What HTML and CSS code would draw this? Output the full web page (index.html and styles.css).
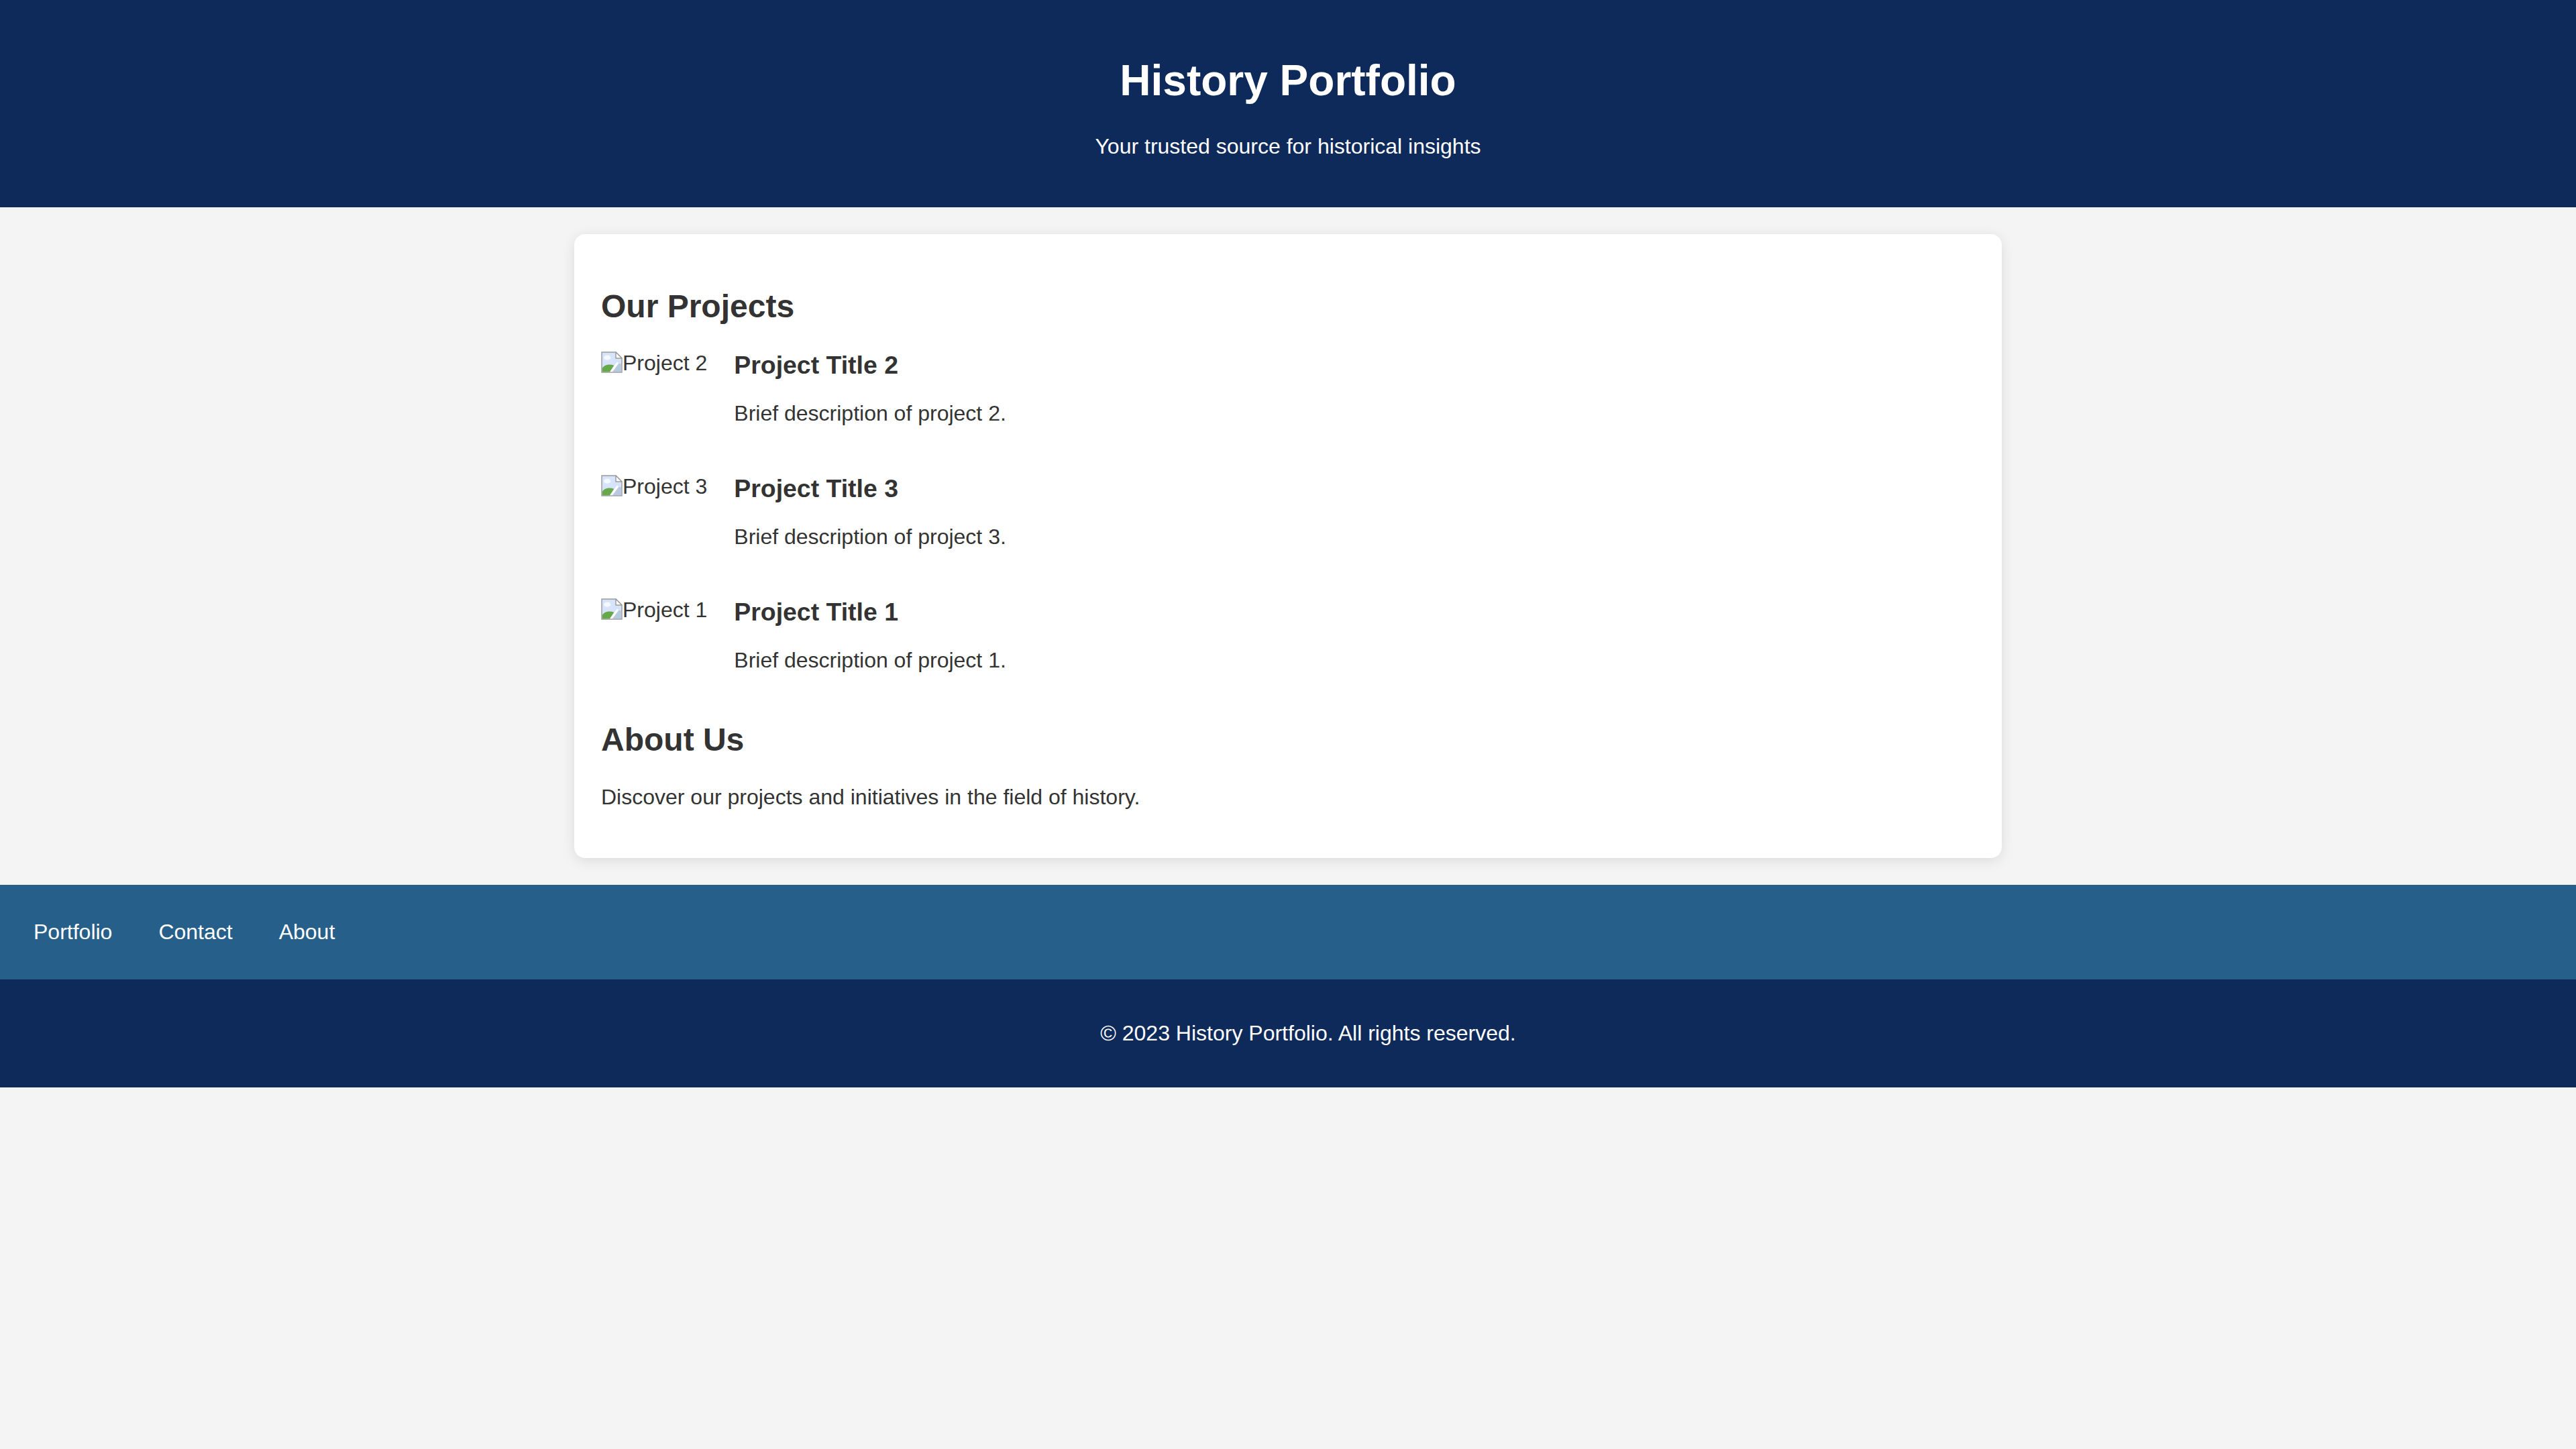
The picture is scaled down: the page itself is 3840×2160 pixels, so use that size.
FILE: index.html
```html
<!DOCTYPE html>
<html lang="en">
<head>
<meta charset="utf-8">
<title>History Portfolio</title>
<link rel="stylesheet" href="styles.css">
</head>
<body>
<header class="site-header">
  <h1 class="site-title">History Portfolio</h1>
  <p class="site-tagline">Your trusted source for historical insights</p>
</header>

<main class="card">
  <section class="projects">
    <h2 class="section-title">Our Projects</h2>

    <div class="project">
      <div class="project-thumb">
        <svg class="broken-icon" viewBox="0 0 16 16" width="32" height="32" aria-hidden="true">
          <path d="M0.5 0.5H11L15.5 5V15.5H0.5Z" fill="#d6e3f8" stroke="#9a9a9a" stroke-width="0.7"/>
          <path d="M11 0.5V5H15.5Z" fill="#fff" stroke="#9a9a9a" stroke-width="0.7" stroke-linejoin="round"/>
          <ellipse cx="4.6" cy="4.6" rx="2.6" ry="1.8" fill="#f4f8ff"/>
          <path d="M0.9 15.1V12.4C2.6 9.6 6.6 9.2 9.6 10.4L6.6 15.1Z" fill="#66a84a"/>
          <path d="M6.6 15.1L11.8 7.9L13.2 8.6L8.4 15.1Z" fill="#fff"/>
          <path d="M8.6 15.1L13.4 8.8L15.1 9.2V15.1Z" fill="#b9c9df"/>
        </svg><span class="alt-text">Project 2</span>
      </div>
      <div class="project-info">
        <h3 class="project-title">Project Title 2</h3>
        <p class="project-desc">Brief description of project 2.</p>
      </div>
    </div>

    <div class="project">
      <div class="project-thumb">
        <svg class="broken-icon" viewBox="0 0 16 16" width="32" height="32" aria-hidden="true">
          <path d="M0.5 0.5H11L15.5 5V15.5H0.5Z" fill="#d6e3f8" stroke="#9a9a9a" stroke-width="0.7"/>
          <path d="M11 0.5V5H15.5Z" fill="#fff" stroke="#9a9a9a" stroke-width="0.7" stroke-linejoin="round"/>
          <ellipse cx="4.6" cy="4.6" rx="2.6" ry="1.8" fill="#f4f8ff"/>
          <path d="M0.9 15.1V12.4C2.6 9.6 6.6 9.2 9.6 10.4L6.6 15.1Z" fill="#66a84a"/>
          <path d="M6.6 15.1L11.8 7.9L13.2 8.6L8.4 15.1Z" fill="#fff"/>
          <path d="M8.6 15.1L13.4 8.8L15.1 9.2V15.1Z" fill="#b9c9df"/>
        </svg><span class="alt-text">Project 3</span>
      </div>
      <div class="project-info">
        <h3 class="project-title">Project Title 3</h3>
        <p class="project-desc">Brief description of project 3.</p>
      </div>
    </div>

    <div class="project">
      <div class="project-thumb">
        <svg class="broken-icon" viewBox="0 0 16 16" width="32" height="32" aria-hidden="true">
          <path d="M0.5 0.5H11L15.5 5V15.5H0.5Z" fill="#d6e3f8" stroke="#9a9a9a" stroke-width="0.7"/>
          <path d="M11 0.5V5H15.5Z" fill="#fff" stroke="#9a9a9a" stroke-width="0.7" stroke-linejoin="round"/>
          <ellipse cx="4.6" cy="4.6" rx="2.6" ry="1.8" fill="#f4f8ff"/>
          <path d="M0.9 15.1V12.4C2.6 9.6 6.6 9.2 9.6 10.4L6.6 15.1Z" fill="#66a84a"/>
          <path d="M6.6 15.1L11.8 7.9L13.2 8.6L8.4 15.1Z" fill="#fff"/>
          <path d="M8.6 15.1L13.4 8.8L15.1 9.2V15.1Z" fill="#b9c9df"/>
        </svg><span class="alt-text">Project 1</span>
      </div>
      <div class="project-info">
        <h3 class="project-title">Project Title 1</h3>
        <p class="project-desc">Brief description of project 1.</p>
      </div>
    </div>
  </section>

  <section class="about">
    <h2 class="section-title">About Us</h2>
    <p class="about-text">Discover our projects and initiatives in the field of history.</p>
  </section>
</main>

<nav class="site-nav">
  <ul class="nav-list">
    <li><a class="nav-link" href="#">Portfolio</a></li>
    <li><a class="nav-link" href="#">Contact</a></li>
    <li><a class="nav-link" href="#">About</a></li>
  </ul>
</nav>

<footer class="site-footer">
  <p class="footer-text">&copy; 2023 History Portfolio. All rights reserved.</p>
</footer>
</body>
</html>
```

FILE: styles.css
```css
html, body {
  margin: 0;
  padding: 0;
}

body {
  font-family: "Liberation Sans", Arial, Helvetica, sans-serif;
  font-size: 32px;
  line-height: normal;
  background: #f4f4f4;
  color: #333333;
}

.site-header {
  background: #0e2a5b;
  color: #ffffff;
  text-align: center;
  padding: 40px;
}

.site-title {
  font-size: 64px;
  margin: 42.88px 0;
}

.site-tagline {
  margin: 32px 0;
}

.card {
  display: block;
  width: 2048px;
  margin: 40px auto;
  padding: 40px;
  background: #ffffff;
  border-radius: 16px;
  box-shadow: 0 4px 20px rgba(0, 0, 0, 0.1);
}

.section-title {
  font-size: 48px;
  margin: 39.84px 0;
}

.project {
  display: flex;
  align-items: flex-start;
  margin-bottom: 40px;
}

.project-thumb {
  display: flex;
  align-items: flex-start;
  margin-right: 40px;
  flex: none;
}

.broken-icon {
  display: block;
  width: 32px;
  height: 32px;
  margin-top: 1px;
}

.alt-text {
  color: #333333;
}

.project-info {
  flex: 1;
}

.project-title {
  font-size: 37.44px;
  margin: 0;
}

.project-desc {
  margin: 32px 0;
}

.about-text {
  margin: 32px 0;
}

.site-nav {
  background: #275f8b;
  padding: 20px 50px;
}

.nav-list {
  list-style: none;
  margin: 32px 0;
  padding: 0;
  display: flex;
  gap: 69px;
}

.nav-link {
  color: #ffffff;
  text-decoration: none;
}

.site-footer {
  background: #0e2a5b;
  color: #ffffff;
  text-align: center;
  padding: 30px 0 30px 60px;
}

.footer-text {
  margin: 32px 0;
}
```
